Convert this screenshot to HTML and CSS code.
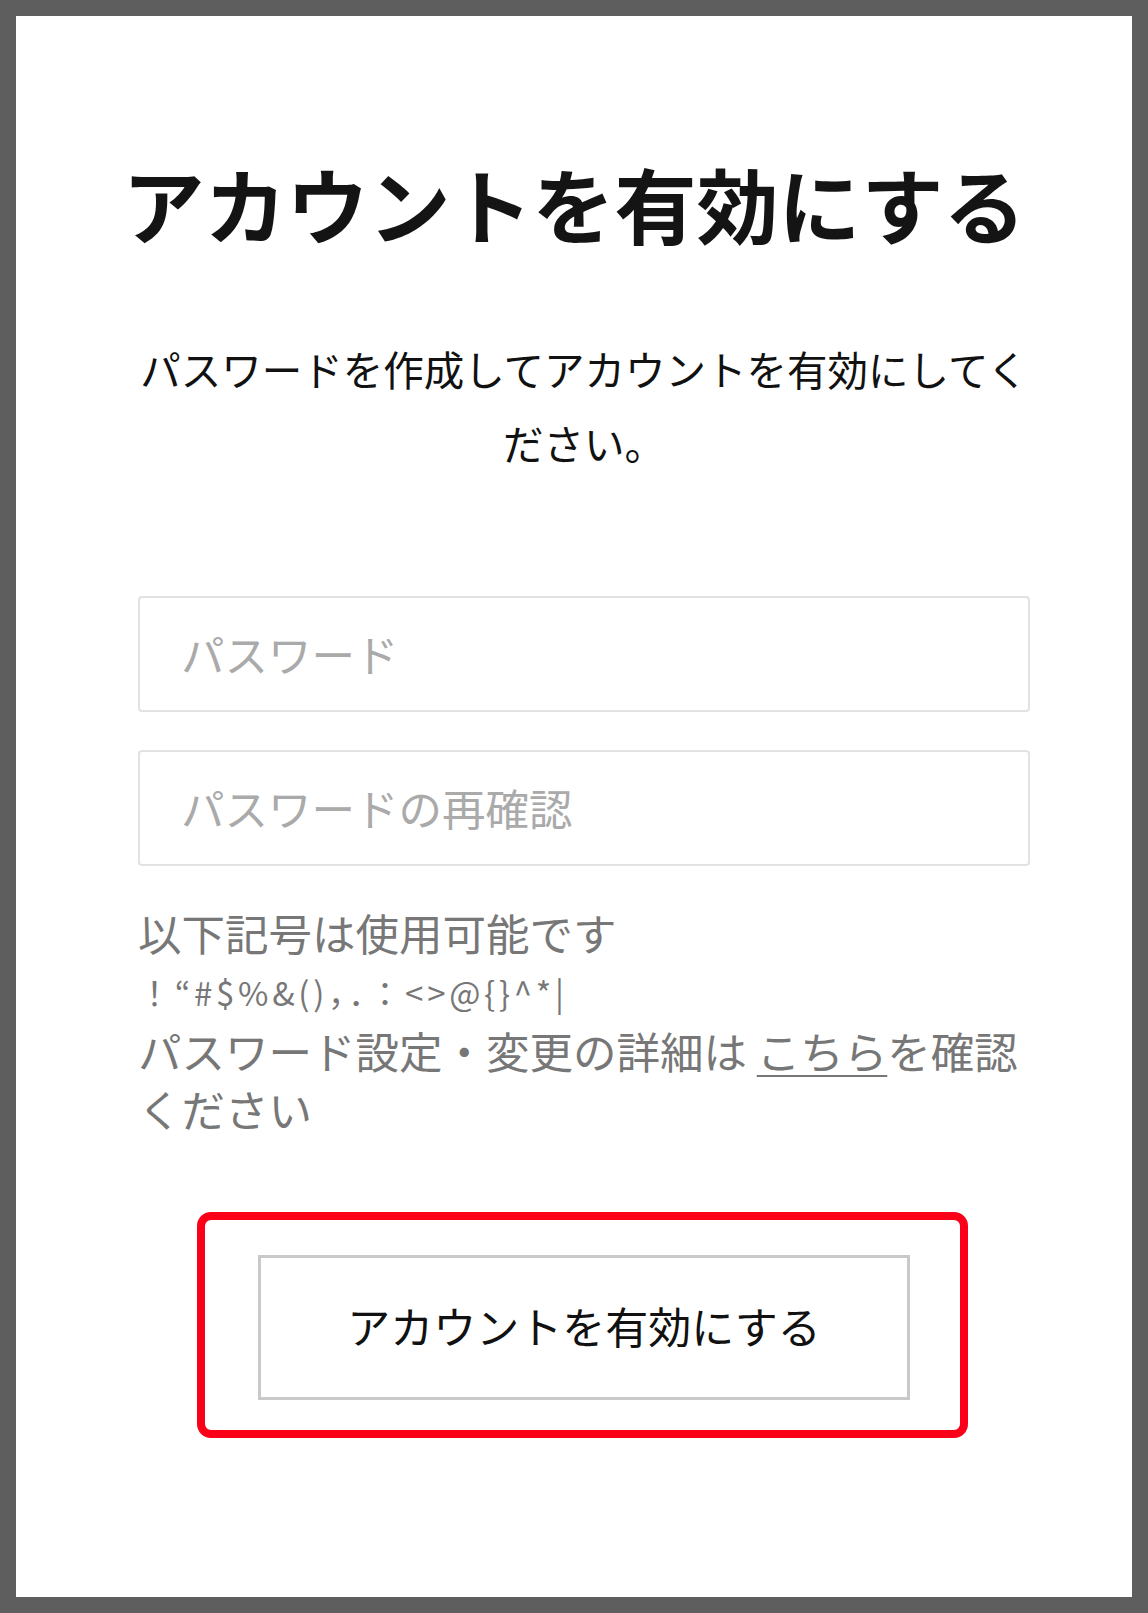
FILE: index.html
```html
<!DOCTYPE html>
<html lang="ja">
<head>
<meta charset="utf-8">
<title>アカウントを有効にする</title>
<link rel="stylesheet" href="styles.css">
</head>
<body>
<main class="panel">
  <h1 class="title">アカウントを有効にする</h1>
  <div class="form">
    <p class="lead">パスワードを作成してアカウントを有効にしてください。</p>
    <div class="field"><span class="placeholder">パスワード</span></div>
    <div class="field field-second"><span class="placeholder">パスワードの再確認</span></div>
    <div class="notes">
      <p class="note-line">以下記号は使用可能です</p>
      <p class="symbols">！“#$%&amp;()，．：&lt;&gt;@{}^*|</p>
      <p class="note-text">パスワード設定・変更の詳細は <a class="link" href="#">こちら</a>を確認<br>ください</p>
    </div>
  </div>
  <div class="highlight">
    <button class="submit" type="button">アカウントを有効にする</button>
  </div>
</main>
</body>
</html>
```

FILE: styles.css
```css
* { box-sizing: border-box; }

html, body {
  margin: 0;
  padding: 0;
}

body {
  background: #5e5e5e;
  padding: 16px;
  font-family: "Noto Sans CJK JP", "Noto Sans", sans-serif;
}

.panel {
  background: #ffffff;
  width: 1116px;
  height: 1581px;
  padding-top: 146px;
}

.title {
  margin: 0;
  font-size: 82px;
  line-height: 82px;
  font-weight: 700;
  color: #141414;
  text-align: center;
  letter-spacing: 0;
  white-space: nowrap;
}

.form {
  margin-left: 122px;
  width: 892px;
}

.lead {
  margin: 88px 0 0;
  font-size: 40.5px;
  line-height: 74px;
  color: #111111;
  text-align: center;
}

.field {
  margin-top: 116px;
  height: 116px;
  border: 2px solid #e2e2e2;
  border-radius: 4px;
  display: flex;
  align-items: center;
  padding-left: 41px;
}

.field-second {
  margin-top: 38px;
}

.placeholder {
  font-size: 43.5px;
  color: #aaaaaa;
  line-height: 1;
}

.notes {
  margin-top: 38px;
  color: #777777;
}

.note-line,
.note-text {
  margin: 0;
  font-size: 43.5px;
  line-height: 58px;
}

.symbols {
  margin: 0;
  font-size: 33px;
  line-height: 60px;
  letter-spacing: 3.7px;
  white-space: nowrap;
}

.link {
  color: #777777;
  text-decoration: underline;
  text-decoration-thickness: 2px;
  text-underline-offset: 6px;
}

.highlight {
  margin: 74px 0 0 181px;
  width: 771px;
  height: 226px;
  border: 8px solid #fa0019;
  border-radius: 14px;
  padding: 35px 50px 30px 53px;
}

.submit {
  display: block;
  width: 652px;
  height: 145px;
  background: #ffffff;
  border: 3px solid #c9c9c9;
  border-radius: 0;
  font-family: "Noto Sans CJK JP", "Noto Sans", sans-serif;
  font-size: 43px;
  line-height: 1;
  color: #111111;
  padding: 0 0 4px;
  cursor: pointer;
}
```
